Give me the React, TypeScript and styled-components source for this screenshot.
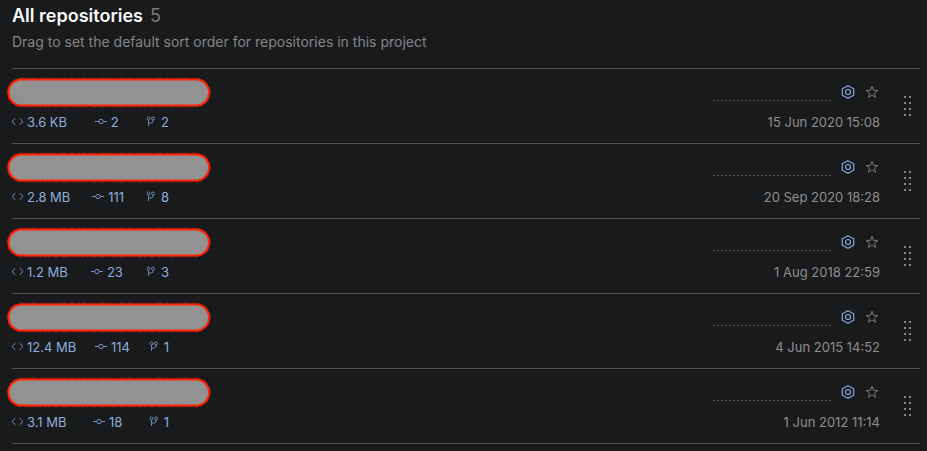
import React from "react";
import styled, { createGlobalStyle } from "styled-components";

const GlobalStyle = createGlobalStyle`
  * { box-sizing: border-box; }
  body {
    margin: 0;
    background: #191a1c;
    color: #8e8f90;
    font-family: Inter, "Liberation Sans", sans-serif;
    font-size: 13px;
    line-height: 20px;
  }
`;

const Page = styled.main`
  padding: 4px 7px 0 12px;
`;

const Title = styled.h1`
  display: flex;
  gap: 7px;
  margin: 0;
  font-size: 18px;
  font-weight: 600;
  line-height: 24px;
  color: #f7f8f8;
`;

const Count = styled.span`
  font-weight: 400;
  color: #77787a;
`;

const Hint = styled.p`
  margin: 4px 0 16px;
  font-size: 14px;
  color: #848586;
`;

const List = styled.ul`
  margin: 0;
  padding: 0;
  list-style: none;
  border-top: 1px solid #515253;
`;

const Row = styled.li`
  display: flex;
  align-items: center;
  height: 75px;
  border-bottom: 1px solid #515253;
`;

const Summary = styled.div`
  display: flex;
  flex-direction: column;
  gap: 5px;
  width: 200px;
  padding-bottom: 3px;
  margin-left: -1px;
`;

const NameLink = styled.a`
  display: block;
  height: 30px;
  margin-left: -5px;
  svg { display: block; }
`;

const Stats = styled.div`
  display: flex;
  justify-content: space-between;
  width: 158px;
  color: #8caede;
`;

const Stat = styled.a`
  display: flex;
  align-items: center;
  gap: 3px;
  color: inherit;
  text-decoration: none;
  svg { color: #7593c2; }
`;

const Details = styled.div`
  display: flex;
  flex-direction: column;
  align-items: flex-end;
  gap: 10px;
  margin-left: auto;
  padding-top: 2px;
`;

const Actions = styled.div`
  display: flex;
  align-items: center;
  gap: 8px;
`;

const Activity = styled.svg`
  display: block;
  margin-right: 1px;
`;

const IconButton = styled.button<{ $tone: string }>`
  display: grid;
  place-items: center;
  width: 16px;
  height: 20px;
  padding: 0;
  border: 0;
  background: none;
  color: ${(p) => p.$tone};
`;

const Handle = styled.button`
  display: grid;
  place-items: center;
  width: 16px;
  height: 32px;
  margin: 0 4px 0 20px;
  padding: 0;
  border: 0;
  background: none;
  color: #858687;
  cursor: grab;
`;

const pill = "M15.5 2.5H190A13 13 0 0 1 190 28.5H15.5A13 13 0 0 1 15.5 2.5Z";

const RedactedName = () => (
  <svg width="206" height="31" viewBox="0 0 206 31" fill="none" aria-hidden="true">
    <path d={pill} stroke="#ff2608" strokeWidth="4" strokeOpacity="0.4" strokeDasharray="2 1 4 2 1 1 3 1 1 3" />
    <path d={pill} fill="#929292" stroke="#ff2608" strokeWidth="2" />
  </svg>
);

const CodeIcon = () => (
  <svg width="13" height="12" viewBox="0 0 13 12" fill="none" stroke="currentColor" aria-hidden="true">
    <path d="M4.3 2.3L1 5.5L4.3 8.7M8.7 2.3L12 5.5L8.7 8.7" />
  </svg>
);

const CommitIcon = () => (
  <svg width="13" height="12" viewBox="0 0 13 12" fill="none" stroke="currentColor" aria-hidden="true">
    <circle cx="6" cy="5.5" r="2.2" />
    <path d="M0 5.5H3.8M8.2 5.5H12" />
  </svg>
);

const BranchIcon = () => (
  <svg width="12" height="12" viewBox="0 0 12 12" fill="none" stroke="currentColor" strokeWidth="0.9" aria-hidden="true">
    <circle cx="2.5" cy="2.5" r="1.5" />
    <circle cx="7" cy="2.5" r="1.5" />
    <path d="M2.5 4V10M7 4V5Q7 7 5 7H2.5" />
  </svg>
);

const SpaceIcon = () => (
  <svg width="14" height="14" viewBox="0 0 14 14" fill="none" stroke="currentColor" strokeWidth="1.2" aria-hidden="true">
    <path d="M7 .8L12.7 3.8V10.2L7 13.2L1.3 10.2V3.8Z" />
    <circle cx="7" cy="7" r="2.5" />
  </svg>
);

const StarIcon = () => (
  <svg width="14" height="14" viewBox="0 0 14 14" fill="none" stroke="currentColor" aria-hidden="true">
    <path d="M7 1.2L8.5 5.3L12.8 5.5L9.4 8.1L10.6 12.4L7 9.9L3.4 12.4L4.6 8.1L1.2 5.5L5.5 5.3Z" />
  </svg>
);

const HandleIcon = () => (
  <svg width="8" height="22" viewBox="0 0 8 22" fill="currentColor" aria-hidden="true">
    {[1, 7, 13, 19].map((y) => (
      <path key={y} d={`M0 ${y}h2v2h-2zM5 ${y}h2v2h-2z`} />
    ))}
  </svg>
);

const repositories = [
  { size: "3.6 KB", commits: 2, branches: 2, updated: "15 Jun 2020 15:08" },
  { size: "2.8 MB", commits: 111, branches: 8, updated: "20 Sep 2020 18:28" },
  { size: "1.2 MB", commits: 23, branches: 3, updated: "1 Aug 2018 22:59" },
  { size: "12.4 MB", commits: 114, branches: 1, updated: "4 Jun 2015 14:52" },
  { size: "3.1 MB", commits: 18, branches: 1, updated: "1 Jun 2012 11:14" },
];

export default function App() {
  return (
    <>
      <GlobalStyle />
      <Page>
        <Title>
          All repositories <Count>{repositories.length}</Count>
        </Title>
        <Hint>Drag to set the default sort order for repositories in this project</Hint>
        <List>
          {repositories.map((repo) => (
            <Row key={repo.updated}>
              <Summary>
                <NameLink href="#repository" aria-label="Repository">
                  <RedactedName />
                </NameLink>
                <Stats>
                  <Stat href="#files"><CodeIcon />{repo.size}</Stat>
                  <Stat href="#commits"><CommitIcon />{repo.commits}</Stat>
                  <Stat href="#branches"><BranchIcon />{repo.branches}</Stat>
                </Stats>
              </Summary>
              <Details>
                <Actions>
                  <Activity width="118" height="20" viewBox="0 0 118 20" aria-hidden="true">
                    <path d="M0 18.5H118" stroke="#555657" strokeDasharray="2 2" />
                  </Activity>
                  <IconButton $tone="#83a9df" aria-label="Open in project"><SpaceIcon /></IconButton>
                  <IconButton $tone="#777879" aria-label="Add to favorites"><StarIcon /></IconButton>
                </Actions>
                <time>{repo.updated}</time>
              </Details>
              <Handle aria-label="Drag to reorder"><HandleIcon /></Handle>
            </Row>
          ))}
        </List>
      </Page>
    </>
  );
}
